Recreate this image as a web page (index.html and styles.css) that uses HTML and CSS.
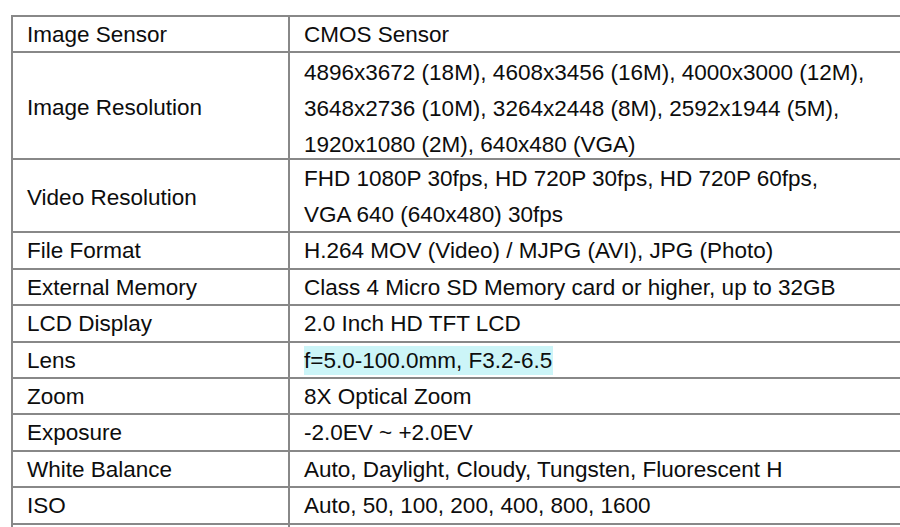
FILE: index.html
```html
<!DOCTYPE html>
<html>
<head>
<meta charset="utf-8">
<link rel="stylesheet" href="styles.css">
</head>
<body>
<table class="spec">
  <tr><td class="k">Image Sensor</td><td class="v">CMOS Sensor</td></tr>
  <tr class="multi"><td class="k">Image Resolution</td><td class="v"><div class="lines three">4896x3672 (18M), 4608x3456 (16M), 4000x3000 (12M),<br>3648x2736 (10M), 3264x2448 (8M), 2592x1944 (5M),<br>1920x1080 (2M), 640x480 (VGA)</div></td></tr>
  <tr class="multi"><td class="k">Video Resolution</td><td class="v"><div class="lines two">FHD 1080P 30fps, HD 720P 30fps, HD 720P 60fps,<br>VGA 640 (640x480) 30fps</div></td></tr>
  <tr><td class="k">File Format</td><td class="v">H.264 MOV (Video) / MJPG (AVI), JPG (Photo)</td></tr>
  <tr><td class="k">External Memory</td><td class="v">Class 4 Micro SD Memory card or higher, up to 32GB</td></tr>
  <tr><td class="k">LCD Display</td><td class="v">2.0 Inch HD TFT LCD</td></tr>
  <tr><td class="k">Lens</td><td class="v"><span class="hl">f=5.0-100.0mm, F3.2-6.5</span></td></tr>
  <tr><td class="k">Zoom</td><td class="v">8X Optical Zoom</td></tr>
  <tr><td class="k">Exposure</td><td class="v">-2.0EV ~ +2.0EV</td></tr>
  <tr><td class="k">White Balance</td><td class="v">Auto, Daylight, Cloudy, Tungsten, Fluorescent H</td></tr>
  <tr><td class="k">ISO</td><td class="v">Auto, 50, 100, 200, 400, 800, 1600</td></tr>
  <tr><td class="k">&nbsp;</td><td class="v">&nbsp;</td></tr>
</table>
</body>
</html>
```

FILE: styles.css
```css
html, body {
  margin: 0;
  padding: 0;
  background: #ffffff;
  overflow: hidden;
}
body {
  padding: 15px 0 0 11px;
  font-family: "Liberation Sans", Arial, sans-serif;
  font-size: 22.5px;
  color: #0d0d0d;
}
.spec {
  border-collapse: separate;
  border-spacing: 0;
  width: 900px;
  border-top: 2px solid #888888;
  border-left: 2px solid #888888;
}
.spec td {
  border-bottom: 2px solid #888888;
  line-height: 33.4px;
  padding: 1px 0 0 0;
  vertical-align: middle;
  white-space: nowrap;
}
.spec td.k {
  width: 261px;
  padding-left: 14px;
  border-right: 2px solid #888888;
}
.spec td.v {
  padding-left: 14px;
}
.spec tr.multi td.k {
  padding-top: 3px;
}
.spec tr.multi td.v {
  padding-top: 0;
}
.lines {
  line-height: 35.8px;
}
.lines.three {
  padding-top: 2px;
  margin-bottom: -4.4px;
}
.lines.two {
  padding-top: 1px;
  margin-bottom: -1.6px;
}
.hl {
  background: #ccf5f8;
  padding: 2px 1px 2px 0;
}
```
